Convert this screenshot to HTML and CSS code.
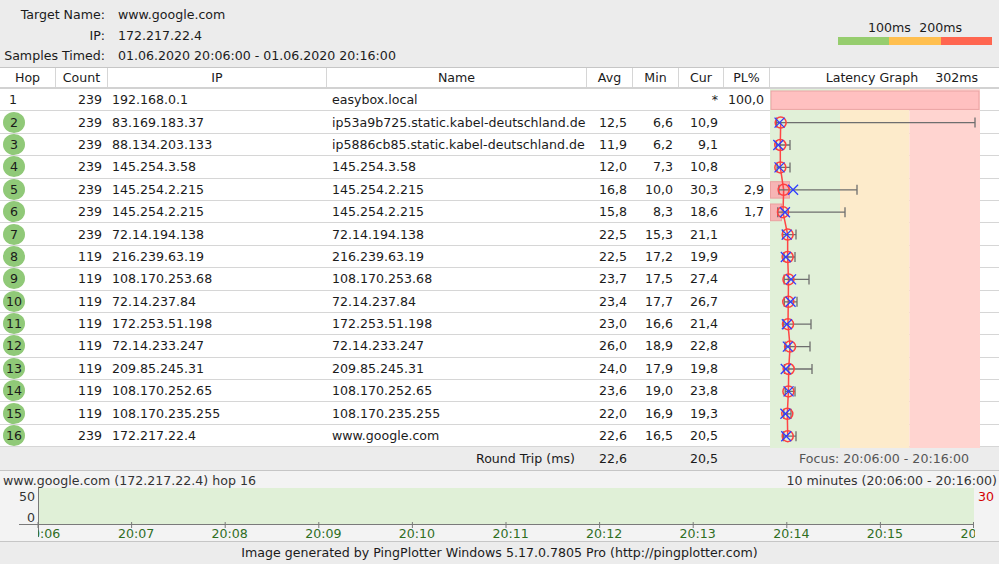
FILE: index.html
```html
<!DOCTYPE html>
<html>
<head>
<meta charset="utf-8">
<link rel="stylesheet" href="styles.css">
</head>
<body>
<div class="page">
  <header class="top">
    <div class="info">
      <span class="lbl">Target Name:</span><span>www.google.com</span>
      <span class="lbl">IP:</span><span>172.217.22.4</span>
      <span class="lbl">Samples Timed:</span><span>01.06.2020 20:06:00 - 01.06.2020 20:16:00</span>
    </div>
    <div class="legend">
      <div class="lg-labels"><span class="l1">100ms</span><span class="l2">200ms</span></div>
      <div class="lg-bar"><span class="g"></span><span class="o"></span><span class="r"></span></div>
    </div>
  </header>

  <div class="tbl">
    <div class="row head">
      <div class="c">Hop</div><div class="c">Count</div><div class="c">IP</div><div class="c">Name</div>
      <div class="c">Avg</div><div class="c">Min</div><div class="c">Cur</div><div class="c">PL%</div>
      <div class="c lg"><span>Latency Graph</span><span>302ms</span></div>
    </div>

    <div class="body">
      <div class="row"><div class="hop"><span class="n plain">1</span></div><div class="num">239</div><div class="txt">192.168.0.1</div><div class="txt nm">easybox.local</div><div class="num"></div><div class="num"></div><div class="num">*</div><div class="num">100,0</div><div></div></div>
      <div class="row"><div class="hop"><span class="n b">2</span></div><div class="num">239</div><div class="txt">83.169.183.37</div><div class="txt nm">ip53a9b725.static.kabel-deutschland.de</div><div class="num">12,5</div><div class="num">6,6</div><div class="num">10,9</div><div class="num"></div><div></div></div>
      <div class="row"><div class="hop"><span class="n b">3</span></div><div class="num">239</div><div class="txt">88.134.203.133</div><div class="txt nm">ip5886cb85.static.kabel-deutschland.de</div><div class="num">11,9</div><div class="num">6,2</div><div class="num">9,1</div><div class="num"></div><div></div></div>
      <div class="row"><div class="hop"><span class="n b">4</span></div><div class="num">239</div><div class="txt">145.254.3.58</div><div class="txt nm">145.254.3.58</div><div class="num">12,0</div><div class="num">7,3</div><div class="num">10,8</div><div class="num"></div><div></div></div>
      <div class="row"><div class="hop"><span class="n b">5</span></div><div class="num">239</div><div class="txt">145.254.2.215</div><div class="txt nm">145.254.2.215</div><div class="num">16,8</div><div class="num">10,0</div><div class="num">30,3</div><div class="num">2,9</div><div></div></div>
      <div class="row"><div class="hop"><span class="n b">6</span></div><div class="num">239</div><div class="txt">145.254.2.215</div><div class="txt nm">145.254.2.215</div><div class="num">15,8</div><div class="num">8,3</div><div class="num">18,6</div><div class="num">1,7</div><div></div></div>
      <div class="row"><div class="hop"><span class="n b">7</span></div><div class="num">239</div><div class="txt">72.14.194.138</div><div class="txt nm">72.14.194.138</div><div class="num">22,5</div><div class="num">15,3</div><div class="num">21,1</div><div class="num"></div><div></div></div>
      <div class="row"><div class="hop"><span class="n b">8</span></div><div class="num">119</div><div class="txt">216.239.63.19</div><div class="txt nm">216.239.63.19</div><div class="num">22,5</div><div class="num">17,2</div><div class="num">19,9</div><div class="num"></div><div></div></div>
      <div class="row"><div class="hop"><span class="n b">9</span></div><div class="num">119</div><div class="txt">108.170.253.68</div><div class="txt nm">108.170.253.68</div><div class="num">23,7</div><div class="num">17,5</div><div class="num">27,4</div><div class="num"></div><div></div></div>
      <div class="row"><div class="hop"><span class="n b">10</span></div><div class="num">119</div><div class="txt">72.14.237.84</div><div class="txt nm">72.14.237.84</div><div class="num">23,4</div><div class="num">17,7</div><div class="num">26,7</div><div class="num"></div><div></div></div>
      <div class="row"><div class="hop"><span class="n b">11</span></div><div class="num">119</div><div class="txt">172.253.51.198</div><div class="txt nm">172.253.51.198</div><div class="num">23,0</div><div class="num">16,6</div><div class="num">21,4</div><div class="num"></div><div></div></div>
      <div class="row"><div class="hop"><span class="n b">12</span></div><div class="num">119</div><div class="txt">72.14.233.247</div><div class="txt nm">72.14.233.247</div><div class="num">26,0</div><div class="num">18,9</div><div class="num">22,8</div><div class="num"></div><div></div></div>
      <div class="row"><div class="hop"><span class="n b">13</span></div><div class="num">119</div><div class="txt">209.85.245.31</div><div class="txt nm">209.85.245.31</div><div class="num">24,0</div><div class="num">17,9</div><div class="num">19,8</div><div class="num"></div><div></div></div>
      <div class="row"><div class="hop"><span class="n b">14</span></div><div class="num">119</div><div class="txt">108.170.252.65</div><div class="txt nm">108.170.252.65</div><div class="num">23,6</div><div class="num">19,0</div><div class="num">23,8</div><div class="num"></div><div></div></div>
      <div class="row"><div class="hop"><span class="n b">15</span></div><div class="num">119</div><div class="txt">108.170.235.255</div><div class="txt nm">108.170.235.255</div><div class="num">22,0</div><div class="num">16,9</div><div class="num">19,3</div><div class="num"></div><div></div></div>
      <div class="row"><div class="hop"><span class="n b">16</span></div><div class="num">239</div><div class="txt">172.217.22.4</div><div class="txt nm">www.google.com</div><div class="num">22,6</div><div class="num">16,5</div><div class="num">20,5</div><div class="num"></div><div></div></div>

      <svg class="lat" viewBox="0 0 230 359" width="230" height="359">
        <rect x="1" y="0" width="70" height="359" fill="#e1f0d8"/>
        <rect x="71" y="0" width="69.5" height="359" fill="#fdebcb"/>
        <rect x="140.5" y="0" width="70.5" height="359" fill="#ffd4d0"/>
        <rect class="pl1" x="2" y="2" width="208" height="18.4"/>
        <rect class="pl" x="1.5" y="92.7" width="19" height="16.4"/>
        <rect class="pl" x="1.5" y="115" width="11" height="16.7"/>
        <polyline class="avl" points="11.69,33.6 11.28,56 11.34,78.4 14.68,100.8 13.99,123.2 18.65,145.6 18.65,168 19.48,190.4 19.27,212.8 19,235.2 21.08,257.6 19.69,280 19.41,302.4 18.3,324.8 18.72,347.2"/>
        <g class="eb">
          <path d="M7.59 33.6H206M7.59 28.6V38.6M206 28.6V38.6"/>
          <path d="M7.31 56H21M7.31 51V61M21 51V61"/>
          <path d="M8.08 78.4H21M8.08 73.4V83.4M21 73.4V83.4"/>
          <path d="M9.95 100.8H88M9.95 95.8V105.8M88 95.8V105.8"/>
          <path d="M8.77 123.2H76M8.77 118.2V128.2M76 118.2V128.2"/>
          <path d="M13.64 145.6H27M13.64 140.6V150.6M27 140.6V150.6"/>
          <path d="M14.96 168H26M14.96 163V173M26 163V173"/>
          <path d="M15.17 190.4H40M15.17 185.4V195.4M40 185.4V195.4"/>
          <path d="M15.31 212.8H28M15.31 207.8V217.8M28 207.8V217.8"/>
          <path d="M14.54 235.2H42M14.54 230.2V240.2M42 230.2V240.2"/>
          <path d="M16.14 257.6H41M16.14 252.6V262.6M41 252.6V262.6"/>
          <path d="M15.45 280H43M15.45 275V285M43 275V285"/>
          <path d="M16.21 302.4H26M16.21 297.4V307.4M26 297.4V307.4"/>
          <path d="M14.75 324.8H22M14.75 319.8V329.8M22 319.8V329.8"/>
          <path d="M14.47 347.2H27M14.47 342.2V352.2M27 342.2V352.2"/>
        </g>
        <g class="av">
          <circle cx="11.69" cy="33.6" r="5.5"/>
          <circle cx="11.28" cy="56" r="5.5"/>
          <circle cx="11.34" cy="78.4" r="5.5"/>
          <circle cx="14.68" cy="100.8" r="5.5"/>
          <circle cx="13.99" cy="123.2" r="5.5"/>
          <circle cx="18.65" cy="145.6" r="5.5"/>
          <circle cx="18.65" cy="168" r="5.5"/>
          <circle cx="19.48" cy="190.4" r="5.5"/>
          <circle cx="19.27" cy="212.8" r="5.5"/>
          <circle cx="19" cy="235.2" r="5.5"/>
          <circle cx="21.08" cy="257.6" r="5.5"/>
          <circle cx="19.69" cy="280" r="5.5"/>
          <circle cx="19.41" cy="302.4" r="5.5"/>
          <circle cx="18.3" cy="324.8" r="5.5"/>
          <circle cx="18.72" cy="347.2" r="5.5"/>
        </g>
        <g class="cx">
          <path d="M5.58 28.6L15.58 38.6M15.58 28.6L5.58 38.6"/>
          <path d="M4.33 51L14.33 61M14.33 51L4.33 61"/>
          <path d="M5.51 73.4L15.51 83.4M15.51 73.4L5.51 83.4"/>
          <path d="M19.07 95.8L29.07 105.8M29.07 95.8L19.07 105.8"/>
          <path d="M10.93 118.2L20.93 128.2M20.93 118.2L10.93 128.2"/>
          <path d="M12.67 140.6L22.67 150.6M22.67 140.6L12.67 150.6"/>
          <path d="M11.84 163L21.84 173M21.84 163L11.84 173"/>
          <path d="M17.05 185.4L27.05 195.4M27.05 185.4L17.05 195.4"/>
          <path d="M16.57 207.8L26.57 217.8M26.57 207.8L16.57 217.8"/>
          <path d="M12.88 230.2L22.88 240.2M22.88 230.2L12.88 240.2"/>
          <path d="M13.86 252.6L23.86 262.6M23.86 252.6L13.86 262.6"/>
          <path d="M11.77 275L21.77 285M21.77 275L11.77 285"/>
          <path d="M14.55 297.4L24.55 307.4M24.55 297.4L14.55 307.4"/>
          <path d="M11.42 319.8L21.42 329.8M21.42 319.8L11.42 329.8"/>
          <path d="M12.26 342.2L22.26 352.2M22.26 342.2L12.26 352.2"/>
        </g>
      </svg>
    </div>

    <div class="row rt">
      <div class="rtl">Round Trip (ms)</div>
      <div class="num">22,6</div><div class="num"></div><div class="num">20,5</div><div class="num"></div>
      <div class="focus">Focus: 20:06:00 - 20:16:00</div>
    </div>
  </div>

  <section class="hist">
    <div class="htitle"><span>www.google.com (172.217.22.4) hop 16</span><span>10 minutes (20:06:00 - 20:16:00)</span></div>
    <svg class="hchart" viewBox="0 0 999 54" width="999" height="54">
      <defs><clipPath id="clipT"><rect x="38" y="38" width="937" height="16"/></clipPath></defs>
      <rect x="39" y="1" width="935" height="36" fill="#e0f0d7"/>
      <path class="ax" d="M38.5 1V50M19 37.5H974"/>
      <path class="tk" d="M38 35V41M131.6 35V41M225.2 35V41M318.8 35V41M412.4 35V41M506 35V41M599.6 35V41M693.2 35V41M786.8 35V41M880.4 35V41M973.5 35V41"/>
      <text class="yl" x="35" y="13.5" text-anchor="end">50</text>
      <text class="yl" x="35" y="34.5" text-anchor="end">0</text>
      <text class="yr" x="978" y="13.5">30</text>
      <g class="tl" clip-path="url(#clipT)">
        <text x="24" y="50.5">20:06</text>
        <text x="118" y="50.5">20:07</text>
        <text x="211.6" y="50.5">20:08</text>
        <text x="305.2" y="50.5">20:09</text>
        <text x="398.8" y="50.5">20:10</text>
        <text x="492.4" y="50.5">20:11</text>
        <text x="586" y="50.5">20:12</text>
        <text x="679.6" y="50.5">20:13</text>
        <text x="773.2" y="50.5">20:14</text>
        <text x="866.8" y="50.5">20:15</text>
        <text x="960.4" y="50.5">20:16</text>
      </g>
    </svg>
  </section>

  <footer class="foot">Image generated by PingPlotter Windows 5.17.0.7805 Pro (http://pingplotter.com)</footer>
</div>
</body>
</html>
```

FILE: styles.css
```css
html, body {
  margin: 0;
  padding: 0;
}
body {
  font-family: "DejaVu Sans", Verdana, sans-serif;
  font-size: 12.6px;
  color: #1b1b1b;
  background: #ffffff;
  width: 999px;
  height: 564px;
  overflow: hidden;
}
.page {
  width: 999px;
}

/* top info header */
.top {
  height: 67px;
  background: #ececec;
  border-bottom: 1px solid #c6c6c6;
  display: flex;
  justify-content: space-between;
}
.info {
  display: grid;
  grid-template-columns: 105px auto;
  column-gap: 13px;
  padding-top: 5px;
  line-height: 20.5px;
  align-content: start;
  white-space: nowrap;
}
.info .lbl {
  text-align: right;
}
.legend {
  width: 154px;
  margin-right: 7px;
  padding-top: 19px;
}
.lg-labels {
  display: grid;
  grid-template-columns: repeat(6, 1fr);
  height: 17px;
  line-height: 17px;
}
.lg-labels span {
  justify-self: center;
  white-space: nowrap;
}
.lg-labels .l1 { grid-column: 2 / 4; }
.lg-labels .l2 { grid-column: 4 / 6; }
.lg-bar {
  margin-top: 1px;
  height: 8px;
  display: flex;
}
.lg-bar span { flex: 1; }
.lg-bar .g { background: #96cd6e; }
.lg-bar .o { background: #ffbf4f; }
.lg-bar .r { background: #ff6650; }

/* table */
.row {
  display: grid;
  grid-template-columns: 55px 52px 219px 260px 46px 46px 45px 46px 230px;
  align-items: center;
  white-space: nowrap;
}
.head {
  height: 19px;
  border-bottom: 2px solid #d2d2d2;
  align-items: stretch;
}
.head .c {
  text-align: center;
  line-height: 19px;
  border-left: 1px solid #d6d6d6;
}
.head .c:first-child {
  border-left: none;
}
.head .lg {
  display: flex;
  justify-content: flex-end;
  gap: 17px;
  padding-right: 21px;
}
.body {
  position: relative;
}
.body .row {
  height: 22.4px;
  box-sizing: border-box;
  border-bottom: 1px solid #d6d6d6;
}
.num {
  text-align: right;
  padding-right: 5px;
}
.txt {
  padding-left: 5px;
}
.txt.nm {
  padding-left: 6px;
}
.hop {
  padding-left: 3px;
  display: flex;
  align-items: center;
}
.n {
  display: inline-flex;
  width: 22px;
  height: 21px;
  align-items: center;
  justify-content: center;
  border-radius: 50%;
}
.n.plain {
  justify-content: flex-start;
  padding-left: 6px;
  box-sizing: border-box;
}
.n.b {
  background: #90c978;
}
.lat {
  position: absolute;
  left: 769px;
  top: 0;
}
.pl1 {
  fill: #ffc0c0;
  stroke: #eaa3a3;
  stroke-width: 1;
}
.pl {
  fill: #f7b4b4;
  stroke: #eba0a0;
  stroke-width: 1;
}
.avl {
  fill: none;
  stroke: #ff4545;
  stroke-width: 1.5;
}
.eb {
  fill: none;
  stroke: #6e6e6e;
  stroke-width: 1.3;
}
.av circle {
  fill: none;
  stroke: #ff4040;
  stroke-width: 1.5;
}
.cx {
  fill: none;
  stroke: #2f3cff;
  stroke-width: 1.3;
}

/* round trip row */
.rt {
  height: 22.6px;
  background: #ececec;
  border-bottom: 1px solid #c6c6c6;
}
.rtl {
  grid-column: 1 / 5;
  text-align: right;
  padding-right: 11px;
}
.focus {
  text-align: center;
  color: #555555;
}

/* history chart */
.hist {
  height: 70px;
  background: #f3f3f3;
}
.htitle {
  display: flex;
  justify-content: space-between;
  height: 16px;
  line-height: 20px;
  padding: 0 2px 0 3px;
  color: #333333;
  white-space: nowrap;
}
.hchart {
  display: block;
}
.hchart text {
  font-family: "DejaVu Sans", Verdana, sans-serif;
  font-size: 12.6px;
}
.ax {
  fill: none;
  stroke: #7a7a7a;
  stroke-width: 1;
}
.tk {
  fill: none;
  stroke: #7a7a7a;
  stroke-width: 1;
}
.yl {
  fill: #333333;
}
.yr {
  fill: #d40000;
}
.tl text {
  fill: #2f6e1f;
}

/* footer */
.foot {
  height: 22px;
  line-height: 22px;
  text-align: center;
  background: #ececec;
  border-top: 1px solid #c6c6c6;
  white-space: nowrap;
}
```
